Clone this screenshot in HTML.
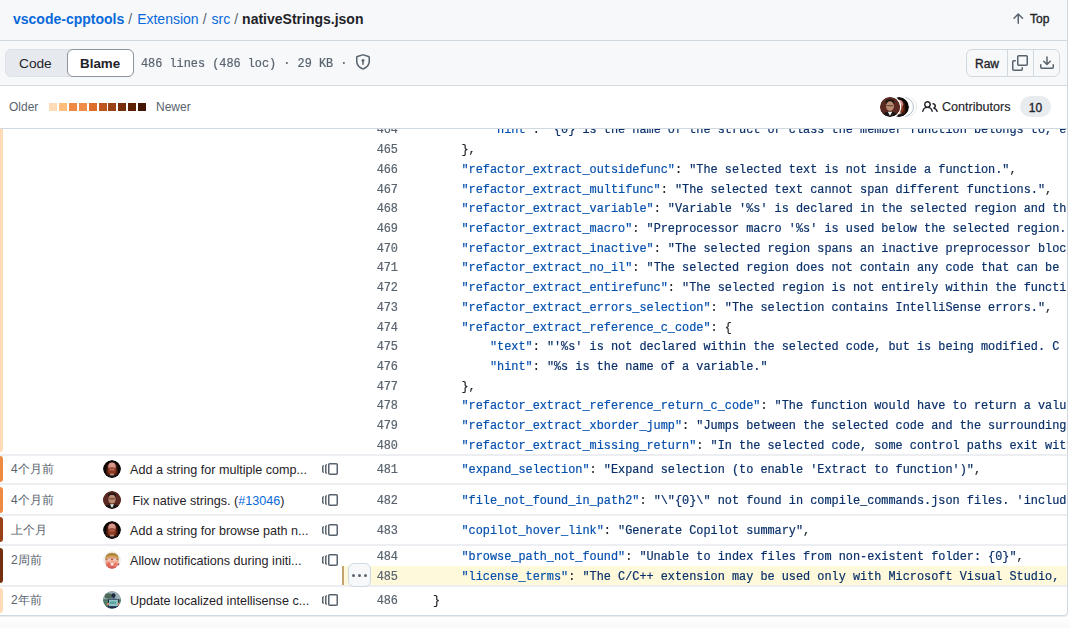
<!DOCTYPE html>
<html><head><meta charset="utf-8">
<style>
*{box-sizing:border-box;margin:0;padding:0}
html,body{width:1080px;height:628px;overflow:hidden;background:linear-gradient(#fff 0,#fff 616px,#f8f9fa 628px);font-family:"Liberation Sans",sans-serif;color:#1f2328}
.abs{position:absolute}
#box{position:absolute;left:-1px;top:-1px;width:1069px;height:617px;border:1px solid #d1d9e0;border-radius:0 0 4px 0;background:#fff;overflow:hidden;box-shadow:0 1px 0 #e8ecf0}
#rightwhite{position:absolute;left:1069px;top:0;width:11px;height:628px;background:#fff}
.hdr{position:absolute;left:0;width:1067px;border-bottom:1px solid #d1d9e0}
#h1{top:0;height:41px;background:#f6f8fa;z-index:5}
#h2{top:41px;height:45px;background:#f6f8fa;z-index:5}
#h3{top:86px;height:43px;background:#fff;z-index:5}
.mono{font-family:"Liberation Mono",monospace}
.ln,.cl{position:absolute;z-index:2;height:19.72px;line-height:19.72px;font-family:"Liberation Mono",monospace;font-size:11.875px;white-space:pre;transform:scaleY(1.1);transform-origin:0 13px;-webkit-text-stroke:0.2px currentColor}
.ln{left:340px;width:58px;text-align:right;color:#59636e}
.cl{left:433px;width:633px;overflow:hidden}
.k{color:#0550ae}.v{color:#0a3069}.p{color:#1f2328}
.bd{position:absolute;left:0;width:1067px;height:2px;background:#eceef2}
.bar{position:absolute;left:0;width:3px;border-radius:0 3px 3px 0}
.age{position:absolute;left:11px;font-size:12px;color:#59636e;line-height:20px}
.av{position:absolute;left:103px;width:18px;height:18px;border-radius:50%}
.msg{position:absolute;left:130px;font-size:12.6px;color:#1f2328;line-height:20px;white-space:nowrap}
.rb{position:absolute;left:322px;width:16px;height:16px}
</style></head><body>
<svg width="0" height="0" style="position:absolute">
<defs>
<filter id="bl" filterUnits="userSpaceOnUse" x="-3" y="-3" width="24" height="24"><feGaussianBlur stdDeviation="0.55"/></filter>
<clipPath id="cc"><circle cx="9" cy="9" r="9"/></clipPath>
<symbol id="avA" viewBox="0 0 18 18"><g clip-path="url(#cc)"><rect width="18" height="18" fill="#0b0806"/><g filter="url(#bl)">
<path d="M3.2 11 Q3 3 9 2.6 Q15 3 14.8 11 L14.5 15 L3.5 15Z" fill="#4a1c0c"/>
<ellipse cx="9" cy="6.6" rx="3.8" ry="4.2" fill="#c8877a"/>
<ellipse cx="9" cy="5" rx="2.6" ry="2.2" fill="#d89a8c"/>
<ellipse cx="9" cy="10.8" rx="4.2" ry="3.6" fill="#8e3a22"/>
<ellipse cx="9" cy="9.4" rx="2.8" ry="1.2" fill="#b06450"/>
<ellipse cx="9" cy="17.8" rx="6.8" ry="3.6" fill="#1c1614"/>
<ellipse cx="9" cy="14.6" rx="2.4" ry="1" fill="#c08876"/>
</g></g></symbol>
<symbol id="avB" viewBox="0 0 18 18"><g clip-path="url(#cc)"><rect width="18" height="18" fill="#4c2119"/><g filter="url(#bl)">
<rect x="0" y="0" width="18" height="18" fill="#5a2a20"/>
<ellipse cx="9" cy="4.6" rx="4" ry="2.6" fill="#1a1210"/>
<ellipse cx="9" cy="8.2" rx="3.6" ry="4.4" fill="#b98a70"/>
<rect x="6" y="7.2" width="6" height="1.1" fill="#6a4a40"/>
<path d="M1 18 Q2 13.5 9 13 Q16 13.5 17 18Z" fill="#1a1414"/>
<path d="M7 13.2 L9 17 L11 13.2Z" fill="#f0f0f0"/>
</g></g></symbol>
<symbol id="avC" viewBox="0 0 18 18"><g clip-path="url(#cc)"><rect width="18" height="18" fill="#eceef0"/><g filter="url(#bl)">
<ellipse cx="9" cy="10.8" rx="6.6" ry="6.8" fill="#f0a890"/>
<path d="M2 10.5 Q1.6 2 9 1.8 Q16.4 2 16 10.5 Q15 7.5 13.5 6.6 Q9 5.2 4.5 6.6 Q3 7.5 2 10.5Z" fill="#c49a4c"/>
<path d="M3 5.5 Q6 2.6 9 3.2 Q12 2.6 15 5.5" stroke="#9a7030" stroke-width="0.9" fill="none"/>
<rect x="3.4" y="7.8" width="11.2" height="0.9" fill="#5a3c38"/>
<ellipse cx="6.2" cy="8.8" rx="1.9" ry="1.3" fill="#f4c8bc"/>
<ellipse cx="11.8" cy="8.8" rx="1.9" ry="1.3" fill="#f4c8bc"/>
<ellipse cx="9" cy="13" rx="1.9" ry="0.9" fill="#f4eeee"/>
<ellipse cx="5.4" cy="13.8" rx="2.4" ry="2.2" fill="#e66a5a"/>
<ellipse cx="12.6" cy="13.8" rx="2.2" ry="2" fill="#ea7a6a"/>
<ellipse cx="9" cy="16.6" rx="4" ry="1.6" fill="#d45a58"/>
<circle cx="15.8" cy="13.4" r="1" fill="#9a4050"/>
</g></g></symbol>
<symbol id="avD" viewBox="0 0 18 18"><g clip-path="url(#cc)"><rect width="18" height="18" fill="#6e8a92"/><g filter="url(#bl)">
<rect x="0" y="0" width="18" height="8" fill="#9aaeb4"/>
<ellipse cx="5.5" cy="5" rx="4" ry="2.8" fill="#4e6a58"/>
<rect x="0" y="8.5" width="18" height="9.5" fill="#4f7a66"/>
<ellipse cx="10.5" cy="4.6" rx="2" ry="2.3" fill="#1c2840"/>
<path d="M5 8.6 Q10.5 6.2 16 8.6 L16 17 L5 17Z" fill="#1a2646"/>
<rect x="6" y="8.6" width="9" height="6.6" fill="#8ec4c4"/>
<rect x="7" y="10.5" width="6" height="2.4" fill="#5aa0a0"/>
<ellipse cx="5" cy="13.2" rx="1.2" ry="1.4" fill="#c88868"/>
<ellipse cx="15.4" cy="13" rx="1.2" ry="1.4" fill="#c88868"/>
<ellipse cx="4" cy="17" rx="3" ry="1.6" fill="#3a4a60"/>
</g></g></symbol>
</defs></svg>
<div id="box">
<div id="h1" class="hdr">
  <div class="abs" style="left:13px;top:11px;font-size:14px;line-height:16px;white-space:nowrap">
    <span style="color:#0969da;font-weight:bold">vscode-cpptools</span><span style="color:#59636e;margin:0 5px 0 4px">/</span><span style="color:#0969da">Extension</span><span style="color:#59636e;margin:0 5px 0 4px">/</span><span style="color:#0969da">src</span><span style="color:#59636e;margin:0 4px 0 4px">/</span><span style="font-weight:bold;color:#1f2328">nativeStrings.json</span>
  </div>
  <svg class="abs" style="left:1010px;top:11px" width="16" height="16" viewBox="0 0 16 16"><path fill="#59636e" d="M3.47 7.78a.75.75 0 0 1 0-1.06l4.25-4.25a.75.75 0 0 1 1.06 0l4.25 4.25a.751.751 0 0 1-.018 1.042.751.751 0 0 1-1.042.018L9 4.81v7.44a.75.75 0 0 1-1.5 0V4.81L4.53 7.78a.75.75 0 0 1-1.06 0Z"/></svg>
  <div class="abs" style="left:1030px;top:11px;font-size:12px;line-height:16px;-webkit-text-stroke:0.35px #1f2328">Top</div>
</div>
<div id="h2" class="hdr">
  <div class="abs" style="left:5px;top:8px;width:129px;height:28px;border-radius:6px;background:#e6eaef;border:1px solid #dde2e8"></div>
  <div class="abs" style="left:19px;top:15px;font-size:13.7px;line-height:16px;color:#1f2328">Code</div>
  <div class="abs" style="left:67px;top:8px;width:67px;height:28px;border-radius:6px;background:#fff;border:1px solid #8c959f"></div>
  <div class="abs" style="left:80px;top:15px;font-size:13.4px;font-weight:bold;line-height:16px;color:#1f2328">Blame</div>
  <div class="abs mono" style="left:141px;top:14.7px;font-size:11.875px;line-height:16px;color:#59636e;white-space:pre;transform:scaleY(1.1);transform-origin:0 12px;-webkit-text-stroke:0.2px currentColor">486 lines (486 loc) · 29 KB ·</div>
  <svg class="abs" style="left:355px;top:13px" width="16" height="16" viewBox="0 0 16 16"><path fill="#59636e" d="m8.533.133 5.25 1.68A1.75 1.75 0 0 1 15 3.48V7c0 1.566-.32 3.182-1.303 4.682-.983 1.498-2.585 2.813-5.032 3.855a1.697 1.697 0 0 1-1.33 0c-2.447-1.042-4.049-2.357-5.032-3.855C1.32 10.182 1 8.566 1 7V3.48a1.755 1.755 0 0 1 1.217-1.667l5.25-1.68a1.748 1.748 0 0 1 1.066 0Zm-.61 1.429.001.001-5.25 1.68a.251.251 0 0 0-.174.237V7c0 1.36.275 2.666 1.057 3.859.784 1.194 2.121 2.342 4.366 3.298a.196.196 0 0 0 .154 0c2.245-.957 3.582-2.103 4.366-3.297C13.225 9.666 13.5 8.358 13.5 7V3.48a.25.25 0 0 0-.174-.238l-5.25-1.68a.25.25 0 0 0-.153 0ZM9.5 6.5c0 .536-.286 1.032-.75 1.3v2.45a.75.75 0 0 1-1.5 0V7.8A1.5 1.5 0 1 1 9.5 6.5Z"/></svg>
  <div class="abs" style="left:966px;top:8px;width:94px;height:28px;border-radius:6px;background:#f6f8fa;border:1px solid #d1d9e0"></div>
  <div class="abs" style="left:1007px;top:9px;width:1px;height:26px;background:#d1d9e0"></div>
  <div class="abs" style="left:1033px;top:9px;width:1px;height:26px;background:#d1d9e0"></div>
  <div class="abs" style="left:975px;top:15px;font-size:12px;line-height:16px;color:#1f2328;-webkit-text-stroke:0.35px #1f2328">Raw</div>
  <svg class="abs" style="left:1012px;top:14px" width="16" height="16" viewBox="0 0 16 16"><path fill="#59636e" d="M0 6.75C0 5.784.784 5 1.75 5h1.5a.75.75 0 0 1 0 1.5h-1.5a.25.25 0 0 0-.25.25v7.5c0 .138.112.25.25.25h7.5a.25.25 0 0 0 .25-.25v-1.5a.75.75 0 0 1 1.5 0v1.5A1.75 1.75 0 0 1 9.25 16h-7.5A1.75 1.75 0 0 1 0 14.25Z"/><path fill="#59636e" d="M5 1.75C5 .784 5.784 0 6.75 0h7.5C15.216 0 16 .784 16 1.75v7.5A1.75 1.75 0 0 1 14.25 11h-7.5A1.75 1.75 0 0 1 5 9.25Zm1.75-.25a.25.25 0 0 0-.25.25v7.5c0 .138.112.25.25.25h7.5a.25.25 0 0 0 .25-.25v-7.5a.25.25 0 0 0-.25-.25Z"/></svg>
  <svg class="abs" style="left:1039px;top:14px" width="16" height="16" viewBox="0 0 16 16"><path fill="#59636e" d="M2.75 14A1.75 1.75 0 0 1 1 12.25v-2.5a.75.75 0 0 1 1.5 0v2.5c0 .138.112.25.25.25h10.5a.25.25 0 0 0 .25-.25v-2.5a.75.75 0 0 1 1.5 0v2.5A1.75 1.75 0 0 1 13.25 14Z"/><path fill="#59636e" d="M7.25 7.689V2a.75.75 0 0 1 1.5 0v5.689l1.97-1.969a.749.749 0 1 1 1.06 1.06l-3.25 3.25a.749.749 0 0 1-1.06 0L4.22 6.78a.749.749 0 1 1 1.06-1.06l1.97 1.969Z"/></svg>
</div>
<div id="h3" class="hdr">
  <div class="abs" style="left:9px;top:14px;font-size:12px;line-height:14px;color:#59636e">Older</div>
  <div class="abs" style="left:49px;top:17px;width:8px;height:8px;background:#ffdcb5"></div>
  <div class="abs" style="left:59px;top:17px;width:8px;height:8px;background:#ffbe7c"></div>
  <div class="abs" style="left:69px;top:17px;width:8px;height:8px;background:#ef8a42"></div>
  <div class="abs" style="left:79px;top:17px;width:8px;height:8px;background:#f08c45"></div>
  <div class="abs" style="left:89px;top:17px;width:8px;height:8px;background:#dc6e2a"></div>
  <div class="abs" style="left:99px;top:17px;width:8px;height:8px;background:#be551e"></div>
  <div class="abs" style="left:108px;top:17px;width:8px;height:8px;background:#9b4118"></div>
  <div class="abs" style="left:118px;top:17px;width:8px;height:8px;background:#782e0b"></div>
  <div class="abs" style="left:128px;top:17px;width:8px;height:8px;background:#5c2005"></div>
  <div class="abs" style="left:138px;top:17px;width:8px;height:8px;background:#421602"></div>
  <div class="abs" style="left:156px;top:14px;font-size:12px;line-height:14px;color:#59636e">Newer</div>
  <div class="abs" style="left:896.5px;top:10.5px;width:20px;height:20px;border-radius:50%;background:#fff;box-shadow:0 0 0 1px #fff;border:1px solid #e6e9e4"></div>
  <div class="abs" style="left:893.5px;top:10.5px;width:20px;height:20px;border-radius:50%;background:#fbfcfc;box-shadow:0 0 0 1px #fff;border:1.2px solid #b4c2cc"></div>
  <svg class="abs" style="left:888.5px;top:10.5px;border-radius:50%;box-shadow:0 0 0 1.2px #fff" width="20" height="20"><use href="#avA"/></svg>
  <svg class="abs" style="left:879.5px;top:10.5px;border-radius:50%;box-shadow:0 0 0 1.2px #fff" width="20" height="20"><use href="#avB"/></svg>
  <svg class="abs" style="left:922px;top:13px" width="16" height="16" viewBox="0 0 16 16"><path fill="#1f2328" d="M2 5.5a3.5 3.5 0 1 1 5.898 2.549 5.508 5.508 0 0 1 3.034 4.084.75.75 0 1 1-1.482.235 4 4 0 0 0-7.9 0 .75.75 0 0 1-1.482-.236A5.507 5.507 0 0 1 3.102 8.05 3.493 3.493 0 0 1 2 5.5ZM11 4a3.001 3.001 0 0 1 2.22 5.018 5.01 5.01 0 0 1 2.56 3.012.749.749 0 0 1-.885.954.752.752 0 0 1-.549-.514 3.507 3.507 0 0 0-2.522-2.372.75.75 0 0 1-.574-.73v-.352a.75.75 0 0 1 .416-.672A1.5 1.5 0 0 0 11 5.5.75.75 0 0 1 11 4Zm-5.5-.5a2 2 0 1 0-.001 3.999A2 2 0 0 0 5.5 3.5Z"/></svg>
  <div class="abs" style="left:942px;top:14px;font-size:12.6px;line-height:14px;color:#1f2328;-webkit-text-stroke:0.15px #1f2328">Contributors</div>
  <div class="abs" style="left:1020px;top:10px;width:31px;height:21px;border-radius:11px;background:#e9ecef"></div><div class="abs" style="left:1020px;top:12px;width:31px;font-size:12px;line-height:21px;text-align:center;color:#1f2328;-webkit-text-stroke:0.35px #1f2328">10</div>
</div>

<!-- CODE -->
<div class="ln" style="top:121.38px">464</div>
<div class="cl" style="top:121.38px">        <span class="k">&quot;hint&quot;</span><span class="p">: </span><span class="v">&quot;{0} is the name of the struct or class the member function belongs to, e.g. MyClass&quot;</span><span class="p">,</span></div>
<div class="ln" style="top:141.10px">465</div>
<div class="cl" style="top:141.10px">    <span class="p">},</span></div>
<div class="ln" style="top:160.82px">466</div>
<div class="cl" style="top:160.82px">    <span class="k">&quot;refactor_extract_outsidefunc&quot;</span><span class="p">: </span><span class="v">&quot;The selected text is not inside a function.&quot;</span><span class="p">,</span></div>
<div class="ln" style="top:180.54px">467</div>
<div class="cl" style="top:180.54px">    <span class="k">&quot;refactor_extract_multifunc&quot;</span><span class="p">: </span><span class="v">&quot;The selected text cannot span different functions.&quot;</span><span class="p">,</span></div>
<div class="ln" style="top:200.26px">468</div>
<div class="cl" style="top:200.26px">    <span class="k">&quot;refactor_extract_variable&quot;</span><span class="p">: </span><span class="v">&quot;Variable &#x27;%s&#x27; is declared in the selected region and then used below it.&quot;</span><span class="p">,</span></div>
<div class="ln" style="top:219.98px">469</div>
<div class="cl" style="top:219.98px">    <span class="k">&quot;refactor_extract_macro&quot;</span><span class="p">: </span><span class="v">&quot;Preprocessor macro &#x27;%s&#x27; is used below the selected region.&quot;</span><span class="p">,</span></div>
<div class="ln" style="top:239.70px">470</div>
<div class="cl" style="top:239.70px">    <span class="k">&quot;refactor_extract_inactive&quot;</span><span class="p">: </span><span class="v">&quot;The selected region spans an inactive preprocessor block.&quot;</span><span class="p">,</span></div>
<div class="ln" style="top:259.42px">471</div>
<div class="cl" style="top:259.42px">    <span class="k">&quot;refactor_extract_no_il&quot;</span><span class="p">: </span><span class="v">&quot;The selected region does not contain any code that can be extracted.&quot;</span><span class="p">,</span></div>
<div class="ln" style="top:279.14px">472</div>
<div class="cl" style="top:279.14px">    <span class="k">&quot;refactor_extract_entirefunc&quot;</span><span class="p">: </span><span class="v">&quot;The selected region is not entirely within the function body.&quot;</span><span class="p">,</span></div>
<div class="ln" style="top:298.86px">473</div>
<div class="cl" style="top:298.86px">    <span class="k">&quot;refactor_extract_errors_selection&quot;</span><span class="p">: </span><span class="v">&quot;The selection contains IntelliSense errors.&quot;</span><span class="p">,</span></div>
<div class="ln" style="top:318.58px">474</div>
<div class="cl" style="top:318.58px">    <span class="k">&quot;refactor_extract_reference_c_code&quot;</span><span class="p">: </span><span class="p">{</span></div>
<div class="ln" style="top:338.30px">475</div>
<div class="cl" style="top:338.30px">        <span class="k">&quot;text&quot;</span><span class="p">: </span><span class="v">&quot;&#x27;%s&#x27; is not declared within the selected code, but is being modified. C code cannot pass arguments by reference.&quot;</span><span class="p">,</span></div>
<div class="ln" style="top:358.02px">476</div>
<div class="cl" style="top:358.02px">        <span class="k">&quot;hint&quot;</span><span class="p">: </span><span class="v">&quot;%s is the name of a variable.&quot;</span></div>
<div class="ln" style="top:377.74px">477</div>
<div class="cl" style="top:377.74px">    <span class="p">},</span></div>
<div class="ln" style="top:397.46px">478</div>
<div class="cl" style="top:397.46px">    <span class="k">&quot;refactor_extract_reference_return_c_code&quot;</span><span class="p">: </span><span class="v">&quot;The function would have to return a value by reference. C code cannot return references.&quot;</span><span class="p">,</span></div>
<div class="ln" style="top:417.18px">479</div>
<div class="cl" style="top:417.18px">    <span class="k">&quot;refactor_extract_xborder_jump&quot;</span><span class="p">: </span><span class="v">&quot;Jumps between the selected code and the surrounding code are present.&quot;</span><span class="p">,</span></div>
<div class="ln" style="top:436.90px">480</div>
<div class="cl" style="top:436.90px">    <span class="k">&quot;refactor_extract_missing_return&quot;</span><span class="p">: </span><span class="v">&quot;In the selected code, some control paths exit without setting the return value.&quot;</span><span class="p">,</span></div>
<div class="ln" style="top:461.40px">481</div>
<div class="cl" style="top:461.40px">    <span class="k">&quot;expand_selection&quot;</span><span class="p">: </span><span class="v">&quot;Expand selection (to enable &#x27;Extract to function&#x27;)&quot;</span><span class="p">,</span></div>
<div class="ln" style="top:492.20px">482</div>
<div class="cl" style="top:492.20px">    <span class="k">&quot;file_not_found_in_path2&quot;</span><span class="p">: </span><span class="v">&quot;\&quot;{0}\&quot; not found in compile_commands.json files. &#x27;includePath&#x27; from c_cpp_properties.json&quot;</span><span class="p">,</span></div>
<div class="ln" style="top:522.30px">483</div>
<div class="cl" style="top:522.30px">    <span class="k">&quot;copilot_hover_link&quot;</span><span class="p">: </span><span class="v">&quot;Generate Copilot summary&quot;</span><span class="p">,</span></div>
<div class="ln" style="top:548.00px">484</div>
<div class="cl" style="top:548.00px">    <span class="k">&quot;browse_path_not_found&quot;</span><span class="p">: </span><span class="v">&quot;Unable to index files from non-existent folder: {0}&quot;</span><span class="p">,</span></div>
<div class="ln" style="top:567.90px">485</div>
<div class="cl" style="top:567.90px">    <span class="k">&quot;license_terms&quot;</span><span class="p">: </span><span class="v">&quot;The C/C++ extension may be used only with Microsoft Visual Studio, Visual Studio for Mac&quot;</span><span class="p">,</span></div>
<div class="ln" style="top:592.20px">486</div>
<div class="cl" style="top:592.20px"><span class="p">}</span></div>

<div class="bar" style="top:120px;height:332px;background:#ffdcb5"></div>
<div class="bd" style="top:454px"></div>
<div class="bar" style="top:456px;height:26px;background:#ef8a42"></div>
<div class="age" style="top:459px">4个月前</div>
<svg class="av" style="top:460px"><use href="#avA"/></svg>
<div class="msg" style="top:460px">Add a string for multiple comp...</div>
<svg class="rb" style="top:461px" viewBox="0 0 16 16"><path fill="#59636e" d="M7.75 14A1.75 1.75 0 0 1 6 12.25v-8.5C6 2.784 6.784 2 7.75 2h6.5c.966 0 1.75.784 1.75 1.75v8.5A1.75 1.75 0 0 1 14.25 14Zm-.25-1.75c0 .138.112.25.25.25h6.5a.25.25 0 0 0 .25-.25v-8.5a.25.25 0 0 0-.25-.25h-6.5a.25.25 0 0 0-.25.25ZM4.9 3.508a.75.75 0 0 1-.274 1.025.249.249 0 0 0-.126.217v6.5c0 .09.048.173.126.217a.75.75 0 0 1-.752 1.298A1.75 1.75 0 0 1 3 11.25v-6.5c0-.649.353-1.214.874-1.516a.75.75 0 0 1 1.025.274ZM1.625 5.533h.001a.249.249 0 0 0-.126.217v4.5c0 .09.048.173.126.217a.75.75 0 0 1-.75 1.298A1.748 1.748 0 0 1 0 10.25v-4.5a1.748 1.748 0 0 1 .873-1.516.75.75 0 1 1 .752 1.299Z"/></svg>
<div class="bd" style="top:483px"></div>
<div class="bar" style="top:487px;height:26px;background:#ef8a42"></div>
<div class="age" style="top:490px">4个月前</div>
<svg class="av" style="top:491px"><use href="#avB"/></svg>
<div class="msg" style="top:491px"><span style="margin-left:2.5px"></span>Fix native strings. (<span style="color:#0969da">#13046</span>)</div>
<svg class="rb" style="top:492px" viewBox="0 0 16 16"><path fill="#59636e" d="M7.75 14A1.75 1.75 0 0 1 6 12.25v-8.5C6 2.784 6.784 2 7.75 2h6.5c.966 0 1.75.784 1.75 1.75v8.5A1.75 1.75 0 0 1 14.25 14Zm-.25-1.75c0 .138.112.25.25.25h6.5a.25.25 0 0 0 .25-.25v-8.5a.25.25 0 0 0-.25-.25h-6.5a.25.25 0 0 0-.25.25ZM4.9 3.508a.75.75 0 0 1-.274 1.025.249.249 0 0 0-.126.217v6.5c0 .09.048.173.126.217a.75.75 0 0 1-.752 1.298A1.75 1.75 0 0 1 3 11.25v-6.5c0-.649.353-1.214.874-1.516a.75.75 0 0 1 1.025.274ZM1.625 5.533h.001a.249.249 0 0 0-.126.217v4.5c0 .09.048.173.126.217a.75.75 0 0 1-.75 1.298A1.748 1.748 0 0 1 0 10.25v-4.5a1.748 1.748 0 0 1 .873-1.516.75.75 0 1 1 .752 1.299Z"/></svg>
<div class="bd" style="top:514px"></div>
<div class="bar" style="top:517px;height:25px;background:#9b4118"></div>
<div class="age" style="top:520px">上个月</div>
<svg class="av" style="top:521px"><use href="#avA"/></svg>
<div class="msg" style="top:521px">Add a string for browse path n...</div>
<svg class="rb" style="top:522px" viewBox="0 0 16 16"><path fill="#59636e" d="M7.75 14A1.75 1.75 0 0 1 6 12.25v-8.5C6 2.784 6.784 2 7.75 2h6.5c.966 0 1.75.784 1.75 1.75v8.5A1.75 1.75 0 0 1 14.25 14Zm-.25-1.75c0 .138.112.25.25.25h6.5a.25.25 0 0 0 .25-.25v-8.5a.25.25 0 0 0-.25-.25h-6.5a.25.25 0 0 0-.25.25ZM4.9 3.508a.75.75 0 0 1-.274 1.025.249.249 0 0 0-.126.217v6.5c0 .09.048.173.126.217a.75.75 0 0 1-.752 1.298A1.75 1.75 0 0 1 3 11.25v-6.5c0-.649.353-1.214.874-1.516a.75.75 0 0 1 1.025.274ZM1.625 5.533h.001a.249.249 0 0 0-.126.217v4.5c0 .09.048.173.126.217a.75.75 0 0 1-.75 1.298A1.748 1.748 0 0 1 0 10.25v-4.5a1.748 1.748 0 0 1 .873-1.516.75.75 0 1 1 .752 1.299Z"/></svg>
<div class="bd" style="top:544px"></div>
<div class="bar" style="top:548px;height:35px;background:#74300e"></div>
<div class="age" style="top:550px">2周前</div>
<svg class="av" style="top:551px"><use href="#avC"/></svg>
<div class="msg" style="top:551px">Allow notifications during initi...</div>
<svg class="rb" style="top:552px" viewBox="0 0 16 16"><path fill="#59636e" d="M7.75 14A1.75 1.75 0 0 1 6 12.25v-8.5C6 2.784 6.784 2 7.75 2h6.5c.966 0 1.75.784 1.75 1.75v8.5A1.75 1.75 0 0 1 14.25 14Zm-.25-1.75c0 .138.112.25.25.25h6.5a.25.25 0 0 0 .25-.25v-8.5a.25.25 0 0 0-.25-.25h-6.5a.25.25 0 0 0-.25.25ZM4.9 3.508a.75.75 0 0 1-.274 1.025.249.249 0 0 0-.126.217v6.5c0 .09.048.173.126.217a.75.75 0 0 1-.752 1.298A1.75 1.75 0 0 1 3 11.25v-6.5c0-.649.353-1.214.874-1.516a.75.75 0 0 1 1.025.274ZM1.625 5.533h.001a.249.249 0 0 0-.126.217v4.5c0 .09.048.173.126.217a.75.75 0 0 1-.75 1.298A1.748 1.748 0 0 1 0 10.25v-4.5a1.748 1.748 0 0 1 .873-1.516.75.75 0 1 1 .752 1.299Z"/></svg>
<div class="bd" style="top:585px"></div>
<div class="bar" style="top:588px;height:25px;background:#ffdcb5"></div>
<div class="age" style="top:590px">2年前</div>
<svg class="av" style="top:591px"><use href="#avD"/></svg>
<div class="msg" style="top:591px">Update localized intellisense c...</div>
<svg class="rb" style="top:592px" viewBox="0 0 16 16"><path fill="#59636e" d="M7.75 14A1.75 1.75 0 0 1 6 12.25v-8.5C6 2.784 6.784 2 7.75 2h6.5c.966 0 1.75.784 1.75 1.75v8.5A1.75 1.75 0 0 1 14.25 14Zm-.25-1.75c0 .138.112.25.25.25h6.5a.25.25 0 0 0 .25-.25v-8.5a.25.25 0 0 0-.25-.25h-6.5a.25.25 0 0 0-.25.25ZM4.9 3.508a.75.75 0 0 1-.274 1.025.249.249 0 0 0-.126.217v6.5c0 .09.048.173.126.217a.75.75 0 0 1-.752 1.298A1.75 1.75 0 0 1 3 11.25v-6.5c0-.649.353-1.214.874-1.516a.75.75 0 0 1 1.025.274ZM1.625 5.533h.001a.249.249 0 0 0-.126.217v4.5c0 .09.048.173.126.217a.75.75 0 0 1-.75 1.298A1.748 1.748 0 0 1 0 10.25v-4.5a1.748 1.748 0 0 1 .873-1.516.75.75 0 1 1 .752 1.299Z"/></svg>
<div class="abs" style="left:342px;top:566px;width:725px;height:19px;background:#fff9dc;border-left:2px solid #c6a26c"></div>
<div class="abs" style="left:348px;top:563px;width:23px;height:24px;border-radius:6px;background:#f6f8fa;border:1px solid #d1d9e0;z-index:3"></div>
<div class="abs" style="left:351.5px;top:573.6px;width:3px;height:3px;border-radius:50%;background:#59636e;z-index:4"></div>
<div class="abs" style="left:357.9px;top:573.6px;width:3px;height:3px;border-radius:50%;background:#59636e;z-index:4"></div>
<div class="abs" style="left:364.3px;top:573.6px;width:3px;height:3px;border-radius:50%;background:#59636e;z-index:4"></div>
</div>
<div id="rightwhite"></div>
</body></html>
